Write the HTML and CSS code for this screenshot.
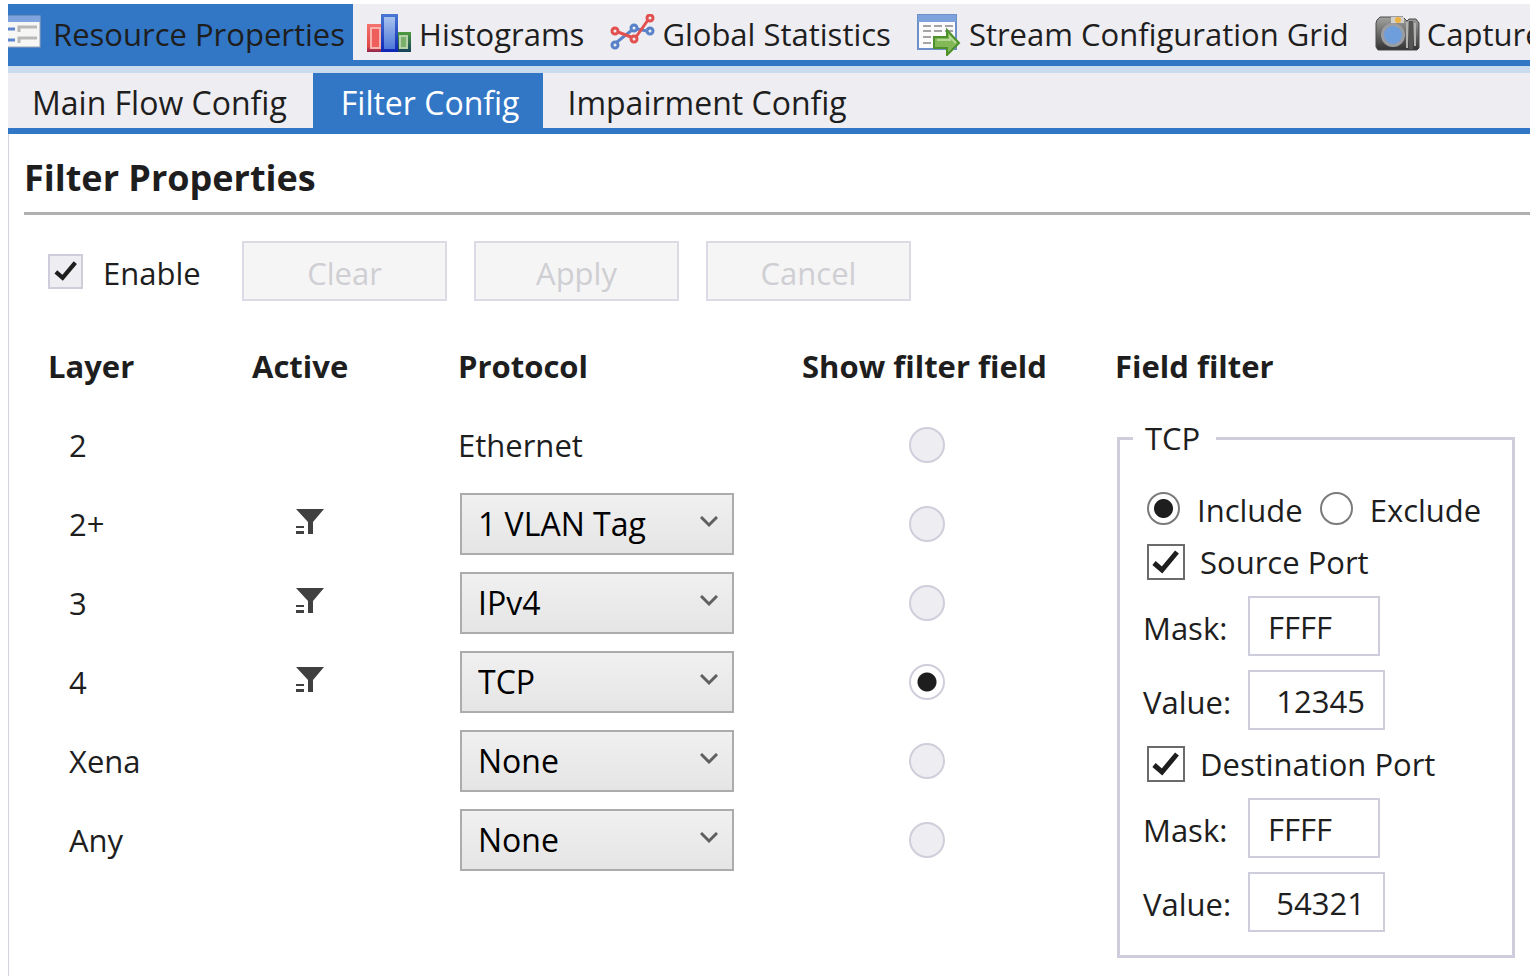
FILE: index.html
```html
<!DOCTYPE html>
<html lang="en">
<head>
<meta charset="utf-8">
<title>Filter Config</title>
<link rel="stylesheet" href="styles.css">
</head>
<body>
<div class="window">
  <nav class="main-tabs" aria-label="Views">
    <button class="main-tab main-tab-active" type="button">
      <svg width="33" height="40" viewBox="0 0 33 40" aria-hidden="true">
        <rect x="-6" y="2" width="38" height="31" fill="#f6f6f4" stroke="#9aa3b3" stroke-width="1"/>
        <rect x="-6" y="2" width="38" height="6" fill="#7fa3dc"/>
        <path d="M0 15h7M0 26h7" stroke="#5b83cf" stroke-width="3"/>
        <path d="M11 18v-5h18M11 29v-5h18" fill="none" stroke="#b9b9b9" stroke-width="3"/>
      </svg>
      Resource Properties
    </button>
    <button class="main-tab" type="button">
      <svg width="45" height="40" viewBox="0 0 45 40" aria-hidden="true">
        <defs>
          <linearGradient id="bar-red" x2="0" y2="1"><stop offset="0" stop-color="#f4736c"/><stop offset=".8" stop-color="#e04a48"/><stop offset="1" stop-color="#8c2350"/></linearGradient>
          <linearGradient id="bar-blue" x2="0" y2="1"><stop offset="0" stop-color="#4a78d4"/><stop offset="1" stop-color="#0d25b4"/></linearGradient>
          <linearGradient id="bar-blue-in" x2="0" y2="1"><stop offset="0" stop-color="#a9c2ee"/><stop offset="1" stop-color="#4d78d8"/></linearGradient>
          <linearGradient id="bar-green" x2="0" y2="1"><stop offset="0" stop-color="#4f9b3e"/><stop offset="1" stop-color="#14405a"/></linearGradient>
        </defs>
        <rect x="0" y="10" width="16" height="28" fill="url(#bar-red)"/>
        <rect x="3" y="13" width="11" height="22" fill="#f9b3ae"/><rect x="5" y="15" width="7" height="18" fill="#ee5f5b"/>
        <rect x="30" y="18" width="14" height="20" fill="url(#bar-green)"/>
        <rect x="32" y="21" width="9" height="14" fill="#b4d3a8"/><rect x="34" y="23" width="5" height="10" fill="#7bb06c"/>
        <rect x="14" y="0" width="17" height="38" fill="url(#bar-blue)"/>
        <rect x="17" y="3" width="11" height="32" fill="url(#bar-blue-in)"/>
      </svg>
      Histograms
    </button>
    <button class="main-tab" type="button">
      <svg width="45" height="40" viewBox="0 0 45 40" aria-hidden="true">
        <g fill="none" stroke="#5a82c8" stroke-width="3"><path d="M7 28 22 16M27 15l10 2"/><circle cx="5" cy="31" r="3"/><circle cx="24" cy="14" r="3"/><circle cx="40" cy="17" r="3"/></g>
        <g fill="none" stroke="#e2514f" stroke-width="3"><path d="M8 18l13 5M26 23 38 6"/><circle cx="5" cy="17" r="3"/><circle cx="24" cy="25" r="3"/><circle cx="40" cy="4" r="3"/></g>
      </svg>
      Global Statistics
    </button>
    <button class="main-tab" type="button">
      <svg width="45" height="44" viewBox="0 0 45 44" aria-hidden="true">
        <rect x="1" y="3" width="38" height="34" fill="#fbfbfb" stroke="#6d8fca" stroke-width="2"/>
        <rect x="1" y="3" width="38" height="7" fill="#7ea2dc"/>
        <path d="M6 14h30M6 19h30M6 25h30M6 31h30" stroke="#a4a4a4" stroke-width="2" stroke-dasharray="8 3"/>
        <path d="M17 25h13v-7l12 13-12 12v-7H17z" fill="#83b857" stroke="#4d902c" stroke-width="2"/>
        <path d="M20 28h13v-3l6 6" fill="none" stroke="#b4d894" stroke-width="2"/>
      </svg>
      Stream Configuration Grid
    </button>
    <button class="main-tab" type="button">
      <svg width="45" height="40" viewBox="0 0 45 40" aria-hidden="true">
        <defs><linearGradient id="cam" x2="0" y2="1"><stop offset="0" stop-color="#a2a2a0"/><stop offset="1" stop-color="#333"/></linearGradient></defs>
        <path d="M2 6l3-3h23l4 4 2-2h7l3 4v25l-2 2H3l-2-3V9z" fill="url(#cam)" stroke="#4a4a4a" stroke-width="1"/>
        <path d="M32 8v26M40 9v23" stroke="#b2b2b0" stroke-width="2"/>
        <path d="M36 7v28" stroke="#555" stroke-width="4"/>
        <path d="M16 3h13v6H16z" fill="#d2d0cb"/><circle cx="23" cy="6" r="3" fill="#edb443"/>
        <ellipse cx="18" cy="21" rx="12" ry="12" fill="#9a9da2"/><ellipse cx="18" cy="21" rx="9" ry="9" fill="#6f9edc"/>
      </svg>
      Capture
    </button>
  </nav>
  <nav class="sub-tabs" aria-label="Port configuration">
    <button class="sub-tab" type="button">Main Flow Config</button>
    <button class="sub-tab sub-tab-active" type="button">Filter Config</button>
    <button class="sub-tab" type="button">Impairment Config</button>
  </nav>
  <main class="panel">
    <h1 class="panel-title">Filter Properties</h1>
    <div class="actions">
      <label class="enable"><input class="check check-muted" type="checkbox" checked><span class="caption">Enable</span></label>
      <button class="action" type="button" disabled>Clear</button>
      <button class="action" type="button" disabled>Apply</button>
      <button class="action" type="button" disabled>Cancel</button>
    </div>
    <div class="columns">
      <table class="layers">
        <thead>
          <tr><th class="col-layer">Layer</th><th class="col-active">Active</th><th class="col-protocol">Protocol</th><th>Show filter field</th></tr>
        </thead>
        <tbody>
          <tr><td class="layer">2</td><td></td><td>Ethernet</td><td class="show"><input class="radio radio-muted" type="radio" name="show" aria-label="Show layer 2"></td></tr>
          <tr><td class="layer">2+</td><td class="active"><svg class="funnel" width="28" height="26" viewBox="0 0 28 26" role="img" aria-label="Active"><path d="M0 0h28L17 13v12h-5V13zM0 17h8v2H0zM0 22h8v3H0z" fill="#404040"/></svg></td><td><select class="protocol" aria-label="Layer 2+ protocol"><option>1 VLAN Tag</option></select></td><td class="show"><input class="radio radio-muted" type="radio" name="show" aria-label="Show layer 2+"></td></tr>
          <tr><td class="layer">3</td><td class="active"><svg class="funnel" width="28" height="26" viewBox="0 0 28 26" role="img" aria-label="Active"><path d="M0 0h28L17 13v12h-5V13zM0 17h8v2H0zM0 22h8v3H0z" fill="#404040"/></svg></td><td><select class="protocol" aria-label="Layer 3 protocol"><option>IPv4</option></select></td><td class="show"><input class="radio radio-muted" type="radio" name="show" aria-label="Show layer 3"></td></tr>
          <tr><td class="layer">4</td><td class="active"><svg class="funnel" width="28" height="26" viewBox="0 0 28 26" role="img" aria-label="Active"><path d="M0 0h28L17 13v12h-5V13zM0 17h8v2H0zM0 22h8v3H0z" fill="#404040"/></svg></td><td><select class="protocol" aria-label="Layer 4 protocol"><option>TCP</option></select></td><td class="show"><input class="radio radio-muted" type="radio" name="show" aria-label="Show layer 4" checked></td></tr>
          <tr><td class="layer">Xena</td><td></td><td><select class="protocol" aria-label="Xena protocol"><option>None</option></select></td><td class="show"><input class="radio radio-muted" type="radio" name="show" aria-label="Show Xena"></td></tr>
          <tr><td class="layer">Any</td><td></td><td><select class="protocol" aria-label="Any protocol"><option>None</option></select></td><td class="show"><input class="radio radio-muted" type="radio" name="show" aria-label="Show Any"></td></tr>
        </tbody>
      </table>
      <section class="field-filter">
        <h2 class="column-title">Field filter</h2>
        <fieldset class="group">
          <legend>TCP</legend>
          <div class="modes">
            <label class="option"><input class="radio" type="radio" name="mode" checked><span class="caption">Include</span></label>
            <label class="option"><input class="radio" type="radio" name="mode"><span class="caption">Exclude</span></label>
          </div>
          <label class="port"><input class="check" type="checkbox" checked><span>Source Port</span></label>
          <div class="field"><label class="caption" for="src-mask">Mask:</label><input class="text mask" id="src-mask" type="text" value="FFFF"></div>
          <div class="field"><label class="caption" for="src-value">Value:</label><input class="text value" id="src-value" type="text" value="12345"></div>
          <label class="port"><input class="check" type="checkbox" checked><span>Destination Port</span></label>
          <div class="field"><label class="caption" for="dst-mask">Mask:</label><input class="text mask" id="dst-mask" type="text" value="FFFF"></div>
          <div class="field"><label class="caption" for="dst-value">Value:</label><input class="text value" id="dst-value" type="text" value="54321"></div>
        </fieldset>
      </section>
    </div>
  </main>
</div>
</body>
</html>
```
FILE: styles.css
```css
* { box-sizing: border-box; }

body {
  margin: 0;
  background: #fff;
  color: #1e1e1e;
  font-family: "Open Sans", "Noto Sans", sans-serif;
  font-size: 31px;
  line-height: 40px;
}

button, input, select {
  margin: 0;
  color: inherit;
  font: inherit;
}

.window {
  display: flex;
  flex-direction: column;
  min-height: 100vh;
  padding: 4px 2px 0 8px;
}

.main-tabs, .sub-tabs {
  display: flex;
  overflow: hidden;
  background: #eeedf2;
  border-bottom: 6px solid #3276c6;
}

.main-tab, .sub-tab {
  flex: none;
  display: flex;
  align-items: center;
  border: 0;
  background: none;
  white-space: nowrap;
}

.main-tab {
  gap: 7px;
  height: 56px;
  padding: 4px 12px 0 14px;
}

.main-tab-active {
  gap: 12px;
  padding: 4px 8px 0 0;
  background: #3276c6;
}

.sub-tabs {
  height: 68px;
  border-top: 7px solid #c9dbed;
  font-size: 32px;
}

.sub-tab { padding: 4px 26px 0 24px; }

.sub-tab-active {
  padding: 4px 24px 0 28px;
  background: #3276c6;
  color: #fff;
}

.panel {
  flex: 1;
  border-left: 1px solid #d3d3de;
}

.panel-title {
  margin: 0 0 0 15px;
  padding: 24px 0 14px;
  border-bottom: 3px solid #b0b0b0;
  font-size: 36px;
  line-height: 40px;
  font-weight: 700;
}

.actions {
  display: flex;
  align-items: center;
  gap: 27px;
  padding: 26px 39px 0;
}

.enable {
  display: flex;
  align-items: center;
  gap: 20px;
  width: 167px;
}

.caption { padding-top: 4px; }

.action {
  width: 205px;
  height: 60px;
  padding: 4px 0 0;
  border: 2px solid #dadbe5;
  background: #f5f5f5;
  color: #cfcfd3;
}

.check {
  appearance: none;
  flex: none;
  width: 38px;
  height: 36px;
  border: 2px solid #6b6b6b;
  background: #fff url("data:image/svg+xml,%3Csvg xmlns='http://www.w3.org/2000/svg' viewBox='0 0 28 26'%3E%3Cpath d='M2 14l8 7L25 3' fill='none' stroke='%231e1e1e' stroke-width='5'/%3E%3C/svg%3E") center / 28px 26px no-repeat;
}

.check-muted {
  width: 35px;
  height: 35px;
  border-color: #cdcddb;
  background-color: #eeedf2;
  background-size: 24px 22px;
}

.radio {
  appearance: none;
  display: block;
  flex: none;
  width: 33px;
  height: 33px;
  border: 2px solid #7b7b7b;
  border-radius: 50%;
  background: #fff;
}

.radio-muted {
  width: 36px;
  height: 36px;
  border-color: #cfcfdc;
  background: #eeedf2;
}

.radio:checked { background: radial-gradient(circle, #1e1e1e 9px, #fff 10px); }

.columns {
  display: flex;
  align-items: flex-start;
  padding: 45px 15px 16px 39px;
}

.layers {
  flex: 1;
  border-collapse: collapse;
  table-layout: fixed;
}

.layers th, .column-title {
  height: 40px;
  margin: 0;
  padding: 0;
  font-size: 31px;
  line-height: 40px;
  font-weight: 700;
  text-align: left;
  white-space: nowrap;
}

.layers thead tr { height: 59px; vertical-align: top; }
.layers tbody tr { height: 79px; }
.layers td { padding: 0; }

.col-layer { width: 204px; }
.col-active { width: 206px; }
.col-protocol { width: 344px; }

.layers .layer { padding-left: 21px; }
.layers .active { padding: 0 0 4px 44px; }
.layers .show { padding-left: 107px; }
.funnel { display: block; }

.protocol {
  appearance: none;
  display: block;
  width: 274px;
  height: 62px;
  margin-left: 2px;
  padding: 0 40px 0 16px;
  border: 2px solid #acacac;
  border-radius: 0;
  background:
    url("data:image/svg+xml,%3Csvg xmlns='http://www.w3.org/2000/svg' viewBox='0 0 18 12'%3E%3Cpath d='M1 1l8 8 8-8' fill='none' stroke='%23606060' stroke-width='3'/%3E%3C/svg%3E") right 14px top 21px / 18px 12px no-repeat,
    linear-gradient(#f0f0f0, #e5e5e5);
  color: #000;
  font-size: 32px;
}

.field-filter { flex: none; width: 400px; }

.group {
  margin: 32px 0 0 2px;
  padding: 28px 23px 9px;
  border: 3px solid #cdcddb;
}

.group legend {
  margin-left: -10px;
  padding: 0 16px 0 12px;
}

.modes {
  display: flex;
  gap: 17px;
  padding-left: 4px;
}

.option {
  display: flex;
  align-items: center;
  gap: 17px;
}

.port {
  display: flex;
  align-items: center;
  gap: 15px;
  padding-left: 4px;
  margin: 12px 0 14px;
}

.field {
  display: flex;
  align-items: center;
  margin-bottom: 14px;
}

.field label { width: 105px; }

.text {
  height: 60px;
  padding: 2px 18px 0;
  border: 2px solid #cdcddb;
  background: #fff;
}

.mask { width: 132px; }
.value { width: 137px; text-align: right; }
```
